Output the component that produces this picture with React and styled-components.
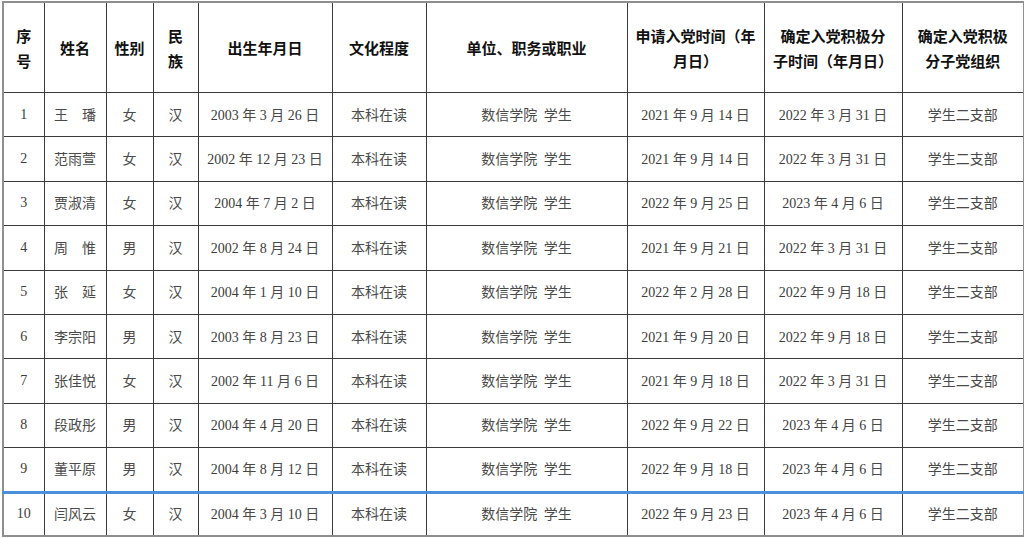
import React from 'react'
import styled, { createGlobalStyle } from 'styled-components'

const Global = createGlobalStyle`
  html, body {
    margin: 0;
    padding: 0;
    background: #fff;
  }
  body {
    font-family: "Liberation Serif", "Noto Sans CJK SC", serif;
  }
`;

const Page = styled.div`
  padding: 1px 0 0 2px;
`;

const Table = styled.table`
  width: 1021px;
  border-collapse: collapse;
  table-layout: fixed;
  border: 2px solid #8f8f8f;
`;

const Col = styled.col`
  width: ${(p) => p.$w}px;
`;

const Th = styled.th`
  height: 89px;
  padding: 0 2px;
  border: 1px solid #3a3a3a;
  font-family: "Noto Sans CJK SC", sans-serif;
  font-size: 15px;
  font-weight: 700;
  line-height: 25px;
  color: #111;
  text-align: center;
  vertical-align: middle;
`;

const Row = styled.tr`
  height: 44.4px;
  ${(p) => p.$marked && `
    & > td { border-top: 3px solid #4a90dc; }
  `}
`;

const Td = styled.td`
  padding: 0;
  border: 1px solid #3a3a3a;
  font-size: 14px;
  line-height: 20px;
  color: #3c3c3c;
  text-align: center;
  vertical-align: middle;
  white-space: nowrap;
`;

const Cjk = styled.span`
  font-family: "Noto Sans CJK SC", sans-serif;
  color: #4a4a4a;
`;

const columns = [
  { w: 41, label: ['序', '号'] },
  { w: 62, label: ['姓名'] },
  { w: 47, label: ['性别'] },
  { w: 45, label: ['民', '族'] },
  { w: 134, label: ['出生年月日'] },
  { w: 94, label: ['文化程度'] },
  { w: 201, label: ['单位、职务或职业'] },
  { w: 137, label: ['申请入党时间（年', '月日）'] },
  { w: 138, label: ['确定入党积极分', '子时间（年月日）'] },
  { w: 122, label: ['确定入党积极', '分子党组织'] },
];

const people = [
  ['王　璠', '女', '2003-3-26', '2021-9-14', '2022-3-31'],
  ['范雨萱', '女', '2002-12-23', '2021-9-14', '2022-3-31'],
  ['贾淑清', '女', '2004-7-2', '2022-9-25', '2023-4-6'],
  ['周　惟', '男', '2002-8-24', '2021-9-21', '2022-3-31'],
  ['张　延', '女', '2004-1-10', '2022-2-28', '2022-9-18'],
  ['李宗阳', '男', '2003-8-23', '2021-9-20', '2022-9-18'],
  ['张佳悦', '女', '2002-11-6', '2021-9-18', '2022-3-31'],
  ['段政彤', '男', '2004-4-20', '2022-9-22', '2023-4-6'],
  ['董平原', '男', '2004-8-12', '2022-9-18', '2023-4-6'],
  ['闫风云', '女', '2004-3-10', '2022-9-23', '2023-4-6'],
];

const DateText = ({ value }) => {
  const [y, m, d] = value.split('-');
  return (
    <>
      {y} <Cjk>年</Cjk> {m} <Cjk>月</Cjk> {d} <Cjk>日</Cjk>
    </>
  );
};

const App = () => {
  return (
    <Page>
      <Global />
      <Table>
        <colgroup>
          {columns.map((c, i) => (
            <Col key={i} $w={c.w} />
          ))}
        </colgroup>
        <thead>
          <tr>
            {columns.map((c, i) => (
              <Th key={i}>
                {c.label.map((line, j) => (
                  <React.Fragment key={j}>
                    {j > 0 && <br />}
                    {line}
                  </React.Fragment>
                ))}
              </Th>
            ))}
          </tr>
        </thead>
        <tbody>
          {people.map(([name, sex, born, applied, confirmed], i) => (
            <Row key={i} $marked={i === 9}>
              <Td>{i + 1}</Td>
              <Td><Cjk>{name}</Cjk></Td>
              <Td><Cjk>{sex}</Cjk></Td>
              <Td><Cjk>汉</Cjk></Td>
              <Td><DateText value={born} /></Td>
              <Td><Cjk>本科在读</Cjk></Td>
              <Td><Cjk>数信学院&nbsp;&nbsp;学生</Cjk></Td>
              <Td><DateText value={applied} /></Td>
              <Td><DateText value={confirmed} /></Td>
              <Td><Cjk>学生二支部</Cjk></Td>
            </Row>
          ))}
        </tbody>
      </Table>
    </Page>
  )
}

export default App
